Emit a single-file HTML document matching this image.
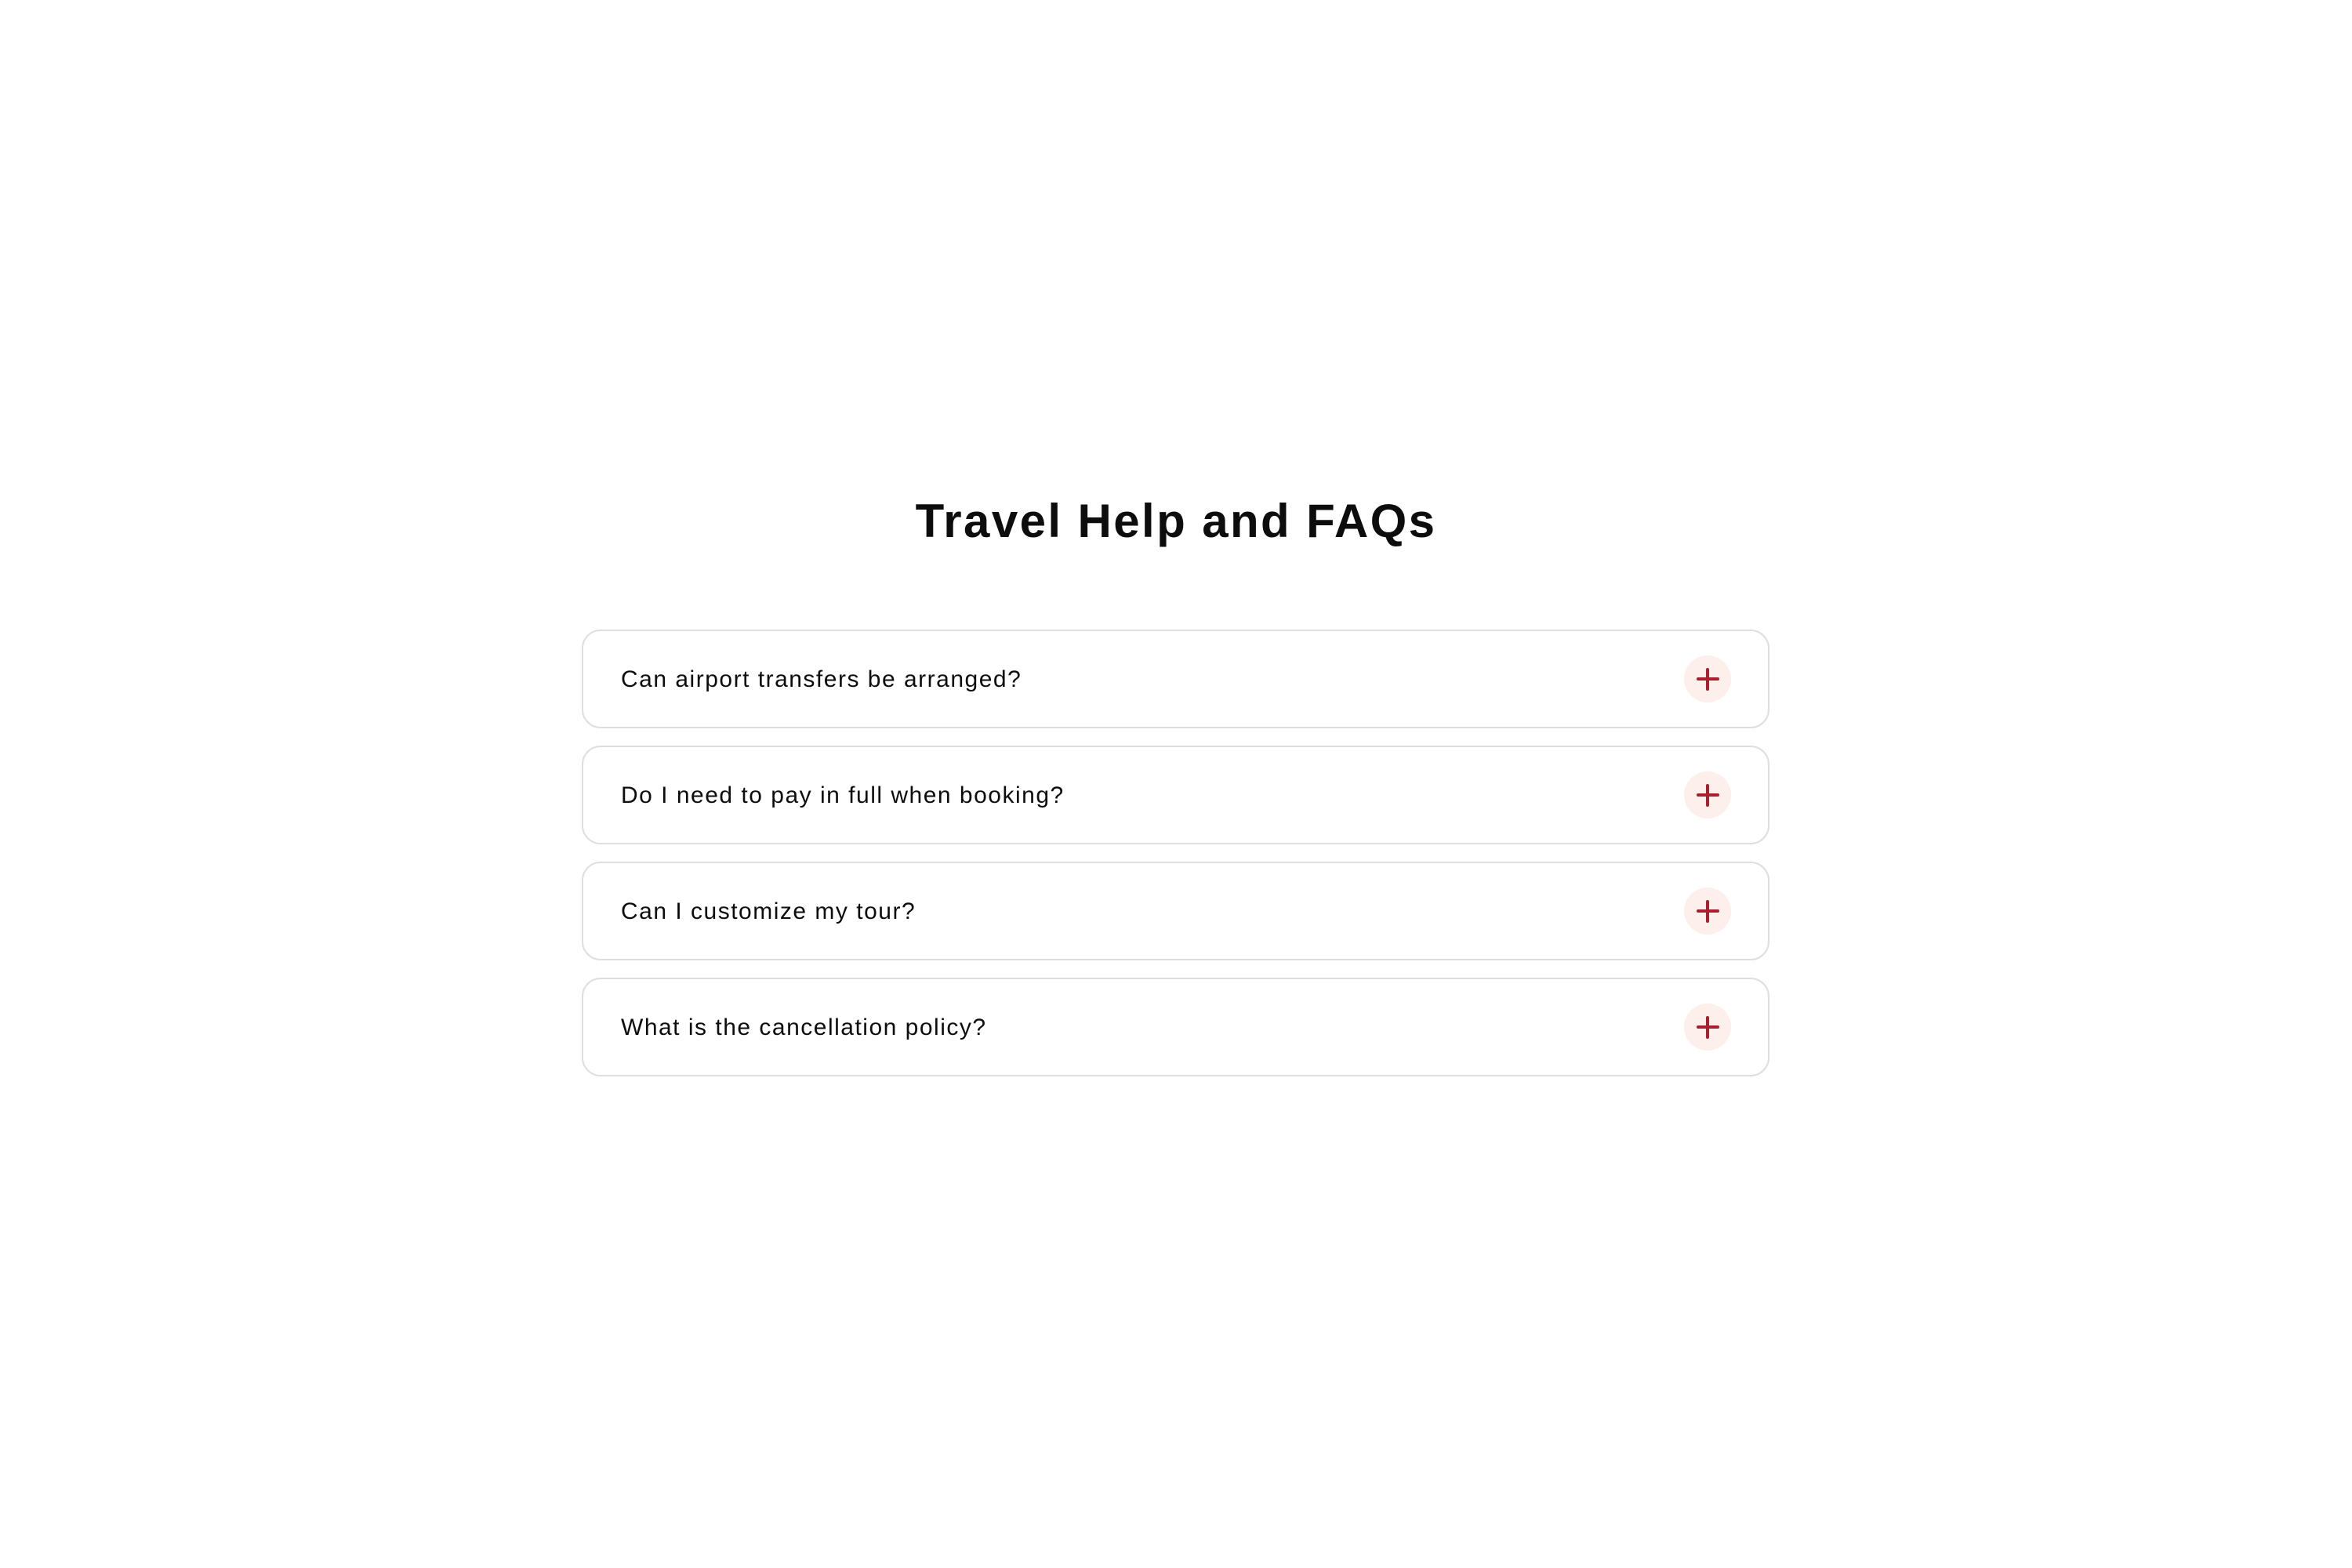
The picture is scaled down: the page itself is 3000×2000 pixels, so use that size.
<!DOCTYPE html>
<html><head><meta charset="utf-8"><style>
html,body{margin:0;padding:0;background:#fff;width:3000px;height:2000px;overflow:hidden}
body{font-family:"Liberation Sans",sans-serif;color:#0d0d0d;position:relative}
h1{position:absolute;top:635px;left:0;width:3000px;text-align:center;margin:0;font-size:60px;line-height:60px;font-weight:700;letter-spacing:2.4px}
.card{position:absolute;left:742px;width:1511px;height:122px;border:2px solid #dedede;border-radius:24px;display:flex;align-items:center}
.q{margin-left:48px;font-size:30px;letter-spacing:1.5px;position:relative;top:1px}
.ic{position:absolute;left:1404px;top:31px;width:60px;height:60px;border-radius:50%;background:#fdefe9}
.ic:before,.ic:after{content:"";position:absolute;background:#a81f2f;border-radius:2px}
.ic:before{left:16px;top:28px;width:29px;height:4px}
.ic:after{left:28px;top:16px;width:4px;height:29px}
</style></head><body>
<h1>Travel Help and FAQs</h1>
<div class="card" style="top:803px"><span class="q">Can airport transfers be arranged?</span><div class="ic"></div></div>
<div class="card" style="top:951px"><span class="q">Do I need to pay in full when booking?</span><div class="ic"></div></div>
<div class="card" style="top:1099px"><span class="q">Can I customize my tour?</span><div class="ic"></div></div>
<div class="card" style="top:1247px"><span class="q">What is the cancellation policy?</span><div class="ic"></div></div>
</body></html>
